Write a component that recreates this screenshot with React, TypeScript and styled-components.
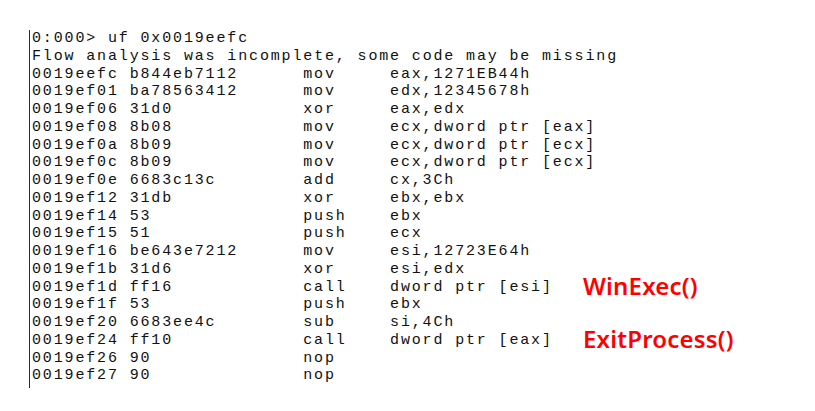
import React from "react";
import styled, { createGlobalStyle } from "styled-components";

const CH = 10.85;

const Global = createGlobalStyle`
  html, body { margin: 0; padding: 0; background: #ffffff; }
  body { width: 815px; height: 411px; overflow: hidden; }
`;

const Page = styled.div`
  padding: 30px 0 0 29px;
`;

const Console = styled.div`
  border-left: 1px solid #2a2a2a;
  padding: 0 0 3px 2px;
  width: 700px;
  font-family: "Liberation Mono", "Courier New", monospace;
  font-size: 15px;
  letter-spacing: ${CH - 9}px;
  line-height: 17.75px;
  color: #111;
`;

const Line = styled.div`
  display: flex;
  align-items: flex-start;
  height: 17.75px;
  white-space: pre;
`;

const Text = styled.span`
  white-space: pre;
`;

const Instr = styled.div`
  display: grid;
  grid-template-columns: ${9 * CH}px ${16 * CH}px ${8 * CH}px 1fr;
  width: 551px;
  flex-shrink: 0;
  white-space: pre;
`;

const Cell = styled.span``;

const Note = styled.span`
  font-family: "Noto Sans", "Open Sans", sans-serif;
  font-size: 24px;
  font-weight: 600;
  letter-spacing: 0.2px;
  color: #ff0000;
  line-height: 17.75px;
  margin-top: -2px;
`;

type Row = [string, string, string, string, string?];

const rows: Row[] = [
  ["0019eefc", "b844eb7112", "mov", "eax,1271EB44h"],
  ["0019ef01", "ba78563412", "mov", "edx,12345678h"],
  ["0019ef06", "31d0", "xor", "eax,edx"],
  ["0019ef08", "8b08", "mov", "ecx,dword ptr [eax]"],
  ["0019ef0a", "8b09", "mov", "ecx,dword ptr [ecx]"],
  ["0019ef0c", "8b09", "mov", "ecx,dword ptr [ecx]"],
  ["0019ef0e", "6683c13c", "add", "cx,3Ch"],
  ["0019ef12", "31db", "xor", "ebx,ebx"],
  ["0019ef14", "53", "push", "ebx"],
  ["0019ef15", "51", "push", "ecx"],
  ["0019ef16", "be643e7212", "mov", "esi,12723E64h"],
  ["0019ef1b", "31d6", "xor", "esi,edx"],
  ["0019ef1d", "ff16", "call", "dword ptr [esi]", "WinExec()"],
  ["0019ef1f", "53", "push", "ebx"],
  ["0019ef20", "6683ee4c", "sub", "si,4Ch"],
  ["0019ef24", "ff10", "call", "dword ptr [eax]", "ExitProcess()"],
  ["0019ef26", "90", "nop", ""],
  ["0019ef27", "90", "nop", ""],
];

export default function App() {
  return (
    <>
      <Global />
      <Page>
        <Console>
          <Line>
            <Text>0:000&gt; uf 0x0019eefc</Text>
          </Line>
          <Line>
            <Text>Flow analysis was incomplete, some code may be missing</Text>
          </Line>
          {rows.map(([a, b, m, o, note]) => (
            <Line key={a}>
              <Instr>
                <Cell>{a}</Cell>
                <Cell>{b}</Cell>
                <Cell>{m}</Cell>
                <Cell>{o}</Cell>
              </Instr>
              {note && <Note>{note}</Note>}
            </Line>
          ))}
        </Console>
      </Page>
    </>
  );
}
